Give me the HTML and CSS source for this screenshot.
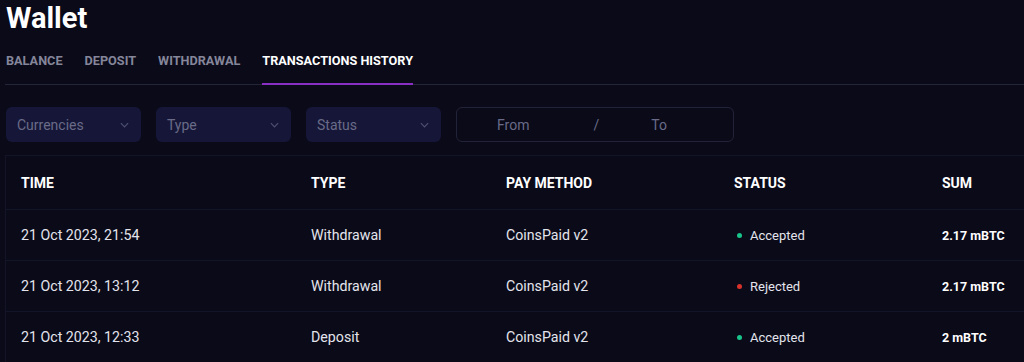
FILE: index.html
```html
<!DOCTYPE html>
<html lang="en">
<head>
    <meta charset="UTF-8">
    <meta name="viewport" content="width=device-width, initial-scale=1.0">
    <title>Wallet</title>
    <link rel="stylesheet" href="styles.css">
</head>
<body>
    <div class="wallet">
        <h1>Wallet</h1>

        <ul class="tabs">
            <li>Balance</li>
            <li>Deposit</li>
            <li>Withdrawal</li>
            <li class="active">Transactions history</li>
        </ul>

        <div class="filters">
            <div class="select">Currencies
                <svg viewBox="0 0 10 6"><path d="M1 1l4 4 4-4"/></svg>
            </div>
            <div class="select">Type
                <svg viewBox="0 0 10 6"><path d="M1 1l4 4 4-4"/></svg>
            </div>
            <div class="select">Status
                <svg viewBox="0 0 10 6"><path d="M1 1l4 4 4-4"/></svg>
            </div>
            <div class="date-range">
                <span class="from">From</span>
                <span class="sep">/</span>
                <span class="to">To</span>
            </div>
        </div>

        <div class="history">
            <div class="row head">
                <div>Time</div>
                <div>Type</div>
                <div>Pay method</div>
                <div>Status</div>
                <div>Sum</div>
            </div>
            <div class="row">
                <div>21 Oct 2023, 21:54</div>
                <div>Withdrawal</div>
                <div>CoinsPaid v2</div>
                <div class="status ok">Accepted</div>
                <div class="sum">2.17 mBTC</div>
            </div>
            <div class="row">
                <div>21 Oct 2023, 13:12</div>
                <div>Withdrawal</div>
                <div>CoinsPaid v2</div>
                <div class="status fail">Rejected</div>
                <div class="sum">2.17 mBTC</div>
            </div>
            <div class="row">
                <div>21 Oct 2023, 12:33</div>
                <div>Deposit</div>
                <div>CoinsPaid v2</div>
                <div class="status ok">Accepted</div>
                <div class="sum">2 mBTC</div>
            </div>
        </div>
    </div>
</body>
</html>
```

FILE: styles.css
```css
body {
    font-family: Roboto, "Liberation Sans", sans-serif;
    margin: 0;
    padding: 0;
    background-color: #0a0a19;
    color: #e4e4ec;
    overflow: hidden;
}

.wallet {
    padding-left: 5px;
}

h1 {
    margin: 0;
    padding-left: 1px;
    font-size: 29px;
    line-height: 36px;
    font-weight: 700;
    color: #fff;
}

.tabs {
    list-style: none;
    margin: 17px 0 0;
    padding: 0 0 0 1px;
    display: flex;
    gap: 22px;
    border-bottom: 1px solid #25253a;
}

.tabs li {
    font-size: 12.7px;
    line-height: 16px;
    font-weight: 700;
    text-transform: uppercase;
    color: #85869a;
    padding-bottom: 14px;
    border-bottom: 2px solid transparent;
    margin-bottom: -1px;
}

.tabs li.active {
    color: #fff;
    border-bottom-color: #8a2fc4;
}

.filters {
    display: flex;
    gap: 15px;
    margin-top: 22px;
    padding-left: 1px;
}

.select {
    width: 135px;
    height: 35px;
    box-sizing: border-box;
    padding: 0 12px 0 11px;
    background-color: #161738;
    border-radius: 6px;
    display: flex;
    align-items: center;
    justify-content: space-between;
    font-size: 14px;
    color: #696b88;
}

.select svg {
    width: 9px;
    height: 6px;
    fill: none;
    stroke: #4e5070;
    stroke-width: 1.3;
}

.date-range {
    width: 278px;
    height: 35px;
    box-sizing: border-box;
    border: 1px solid #222338;
    border-radius: 6px;
    display: flex;
    align-items: center;
    font-size: 14px;
    color: #696b88;
    padding-left: 40px;
}

.date-range .sep {
    margin-left: 64px;
}

.date-range .to {
    margin-left: 52px;
}

.history {
    margin-top: 13px;
    width: 1060px;
    border: 1px solid #141428;
    border-right: none;
}

.row {
    display: grid;
    grid-template-columns: 290px 195px 228px 208px 1fr;
    align-items: center;
    height: 50px;
    border-top: 1px solid #141428;
    font-size: 14.2px;
}

.row > div {
    padding-left: 15px;
}

.row.head {
    height: 53px;
    border-top: none;
    font-size: 14px;
    font-weight: 700;
    text-transform: uppercase;
    color: #fff;
}

.status {
    display: flex;
    align-items: center;
    gap: 8px;
    font-size: 13px;
}

.status::before {
    content: "";
    width: 5px;
    height: 5px;
    border-radius: 50%;
    margin-left: 3px;
}

.status.ok::before {
    background-color: #19c48a;
}

.status.fail::before {
    background-color: #d8322a;
}

.sum {
    font-weight: 700;
    font-size: 12.5px;
    color: #fff;
}
```
